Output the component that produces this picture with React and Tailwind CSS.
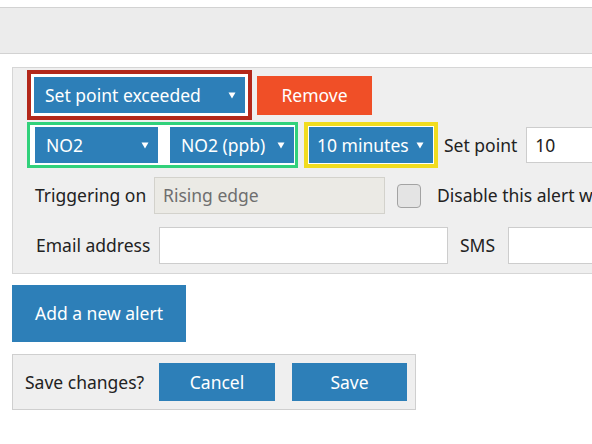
import React from 'react';

const font = { fontFamily: '"Noto Sans", "Open Sans", sans-serif' };

const Caret = () => (
  <svg width="8" height="7" viewBox="0 0 8 7" className="shrink-0">
    <path d="M0.5 0.5 L7.5 0.5 L4 6.5 Z" fill="#ffffff" />
  </svg>
);

const Select = ({ label, className }) => (
  <div className={`flex items-center justify-between bg-[#2d7fb8] text-white h-[36px] pr-[9px] ${className}`}>
    <span>{label}</span>
    <Caret />
  </div>
);

export default function App() {
  return (
    <div className="w-[592px] h-[444px] overflow-hidden bg-white text-[17.5px] text-[#222]" style={font}>
      <div className="mt-[7px] h-[47px] bg-[#ececec] border-y border-[#d2d2d2]" />

      <div className="ml-[12px] mt-[13px] w-[640px] border border-[#d6d6d6] bg-[#efefef] pt-[2px] pb-[9px] pl-[14px]">
        {/* row 1 */}
        <div className="flex items-center">
          <div className="border-[4px] border-[#b3281b] bg-white p-[3px]">
            <Select label="Set point exceeded" className="w-[211px] pl-[11px]" />
          </div>
          <button className="ml-[5px] w-[115px] h-[39px] bg-[#f04f27] text-white">Remove</button>
        </div>

        {/* row 2 */}
        <div className="flex items-center mt-[2px]">
          <div className="flex gap-[12px] border-[3px] border-[#31d17b] bg-white pl-[5px] pr-[1px] py-[2px]">
            <Select label="NO2" className="w-[123px] pl-[11px]" />
            <Select label="NO2 (ppb)" className="w-[124px] pl-[11px]" />
          </div>
          <div className="ml-[6px] border-[4px] border-[#f1dc1f] bg-white p-[1px]">
            <Select label="10 minutes" className="w-[124px] pl-[8px]" />
          </div>
          <span className="ml-[6px]">Set point</span>
          <div className="ml-[9px] w-[120px] h-[36px] bg-white border border-[#cdcdcd] flex items-center pl-[8px]">10</div>
        </div>

        {/* row 3 */}
        <div className="flex items-center mt-[9px] pl-[8px]">
          <span className="w-[119px]">Triggering on</span>
          <div className="w-[231px] h-[37px] bg-[#ebeae5] border border-[#d3d2cc] flex items-center pl-[8px] text-[#6f6f6f]">
            Rising edge
          </div>
          <div className="ml-[12px] w-[24px] h-[24px] rounded-[4px] border border-[#a3a3a3] bg-[#e4e4e4]" />
          <span className="ml-[16px] whitespace-nowrap">Disable this alert when</span>
        </div>

        {/* row 4 */}
        <div className="flex items-center mt-[13px] pl-[9px]">
          <span className="w-[123px]">Email address</span>
          <div className="w-[289px] h-[37px] bg-white border border-[#cdcdcd]" />
          <span className="ml-[12px] w-[48px]">SMS</span>
          <div className="w-[120px] h-[37px] bg-white border border-[#cdcdcd]" />
        </div>
      </div>

      <button className="block ml-[12px] mt-[11px] w-[174px] h-[57px] bg-[#2d7fb8] text-white">Add a new alert</button>

      <div className="ml-[12px] mt-[12px] w-[404px] h-[56px] border border-[#cfcfcf] bg-[#efefef] flex items-center pl-[12px]">
        <span className="w-[134px]">Save changes?</span>
        <button className="w-[116px] h-[38px] bg-[#2d7fb8] text-white">Cancel</button>
        <button className="ml-[17px] w-[115px] h-[38px] bg-[#2d7fb8] text-white">Save</button>
      </div>
    </div>
  );
}
